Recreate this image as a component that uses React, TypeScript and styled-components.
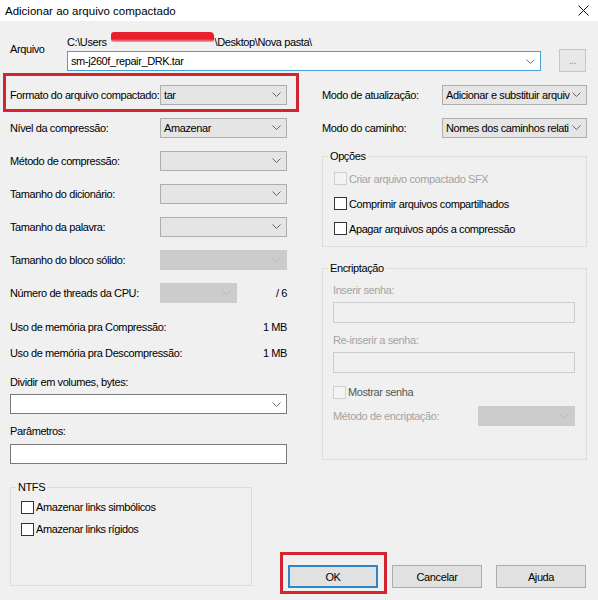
import styled, { createGlobalStyle, css } from 'styled-components'

const GlobalStyle = createGlobalStyle`
  html, body {
    margin: 0;
    padding: 0;
    background: #f0f0f0;
  }
  body {
    font-family: "Liberation Sans", Arial, sans-serif;
    font-size: 11px;
    letter-spacing: -0.4px;
    color: #000;
  }
`

type SelectVariant = 'normal' | 'disabled' | 'white' | 'focus'

const Chevron = () => (
  <ChevronSvg width="9" height="5" viewBox="0 0 9 5">
    <polyline points="0.5,0.5 4.5,4.5 8.5,0.5" fill="none" stroke="currentColor" strokeWidth="1" />
  </ChevronSvg>
)

const CloseIcon = () => (
  <svg width="11" height="11" viewBox="0 0 11 11">
    <path d="M0.5 0.5 L10.5 10.5 M10.5 0.5 L0.5 10.5" stroke="#111" strokeWidth="1" />
  </svg>
)

const Select = ({ variant = 'normal', width, children }: {
  variant?: SelectVariant
  width: string
  children?: React.ReactNode
}) => (
  <SelectBox $variant={variant} $width={width}>
    <SelectText>{children}</SelectText>
    <Chevron />
  </SelectBox>
)

const Check = ({ label, disabled, dim }: { label: string; disabled?: boolean; dim?: boolean }) => (
  <CheckRow $disabled={disabled} $dim={dim}>
    <CheckBox $disabled={disabled} />
    <span>{label}</span>
  </CheckRow>
)

export default function App() {
  return (
    <>
      <GlobalStyle />
      <Window>
        <TitleBar>
          <Title>Adicionar ao arquivo compactado</Title>
          <CloseIcon />
        </TitleBar>

        <Body>
          <ArchiveSection>
            <ArchiveLabel>Arquivo</ArchiveLabel>
            <div>
              <PathText>
                C:\Users<Redaction />\Desktop\Nova pasta\
              </PathText>
              <Select variant="focus" width="474px">sm-j260f_repair_DRK.tar</Select>
            </div>
            <BrowseButton>...</BrowseButton>
          </ArchiveSection>

          <Columns>
            <LeftColumn>
              <FormRow $columns="150px 127px">
                <span>Formato do arquivo compactado:</span>
                <Select width="127px">tar</Select>
                <Annotation $inset="-5px -12px -1px -7px" />
              </FormRow>
              <FormRow $columns="150px 127px">
                <span>Nível da compressão:</span>
                <Select width="127px">Amazenar</Select>
              </FormRow>
              <FormRow $columns="150px 127px">
                <span>Método de compressão:</span>
                <Select width="127px" />
              </FormRow>
              <FormRow $columns="150px 127px">
                <span>Tamanho do dicionário:</span>
                <Select width="127px" />
              </FormRow>
              <FormRow $columns="150px 127px">
                <span>Tamanho da palavra:</span>
                <Select width="127px" />
              </FormRow>
              <FormRow $columns="150px 127px">
                <span>Tamanho do bloco sólido:</span>
                <Select variant="disabled" width="127px" />
              </FormRow>
              <FormRow $columns="150px 77px 1fr">
                <span>Número de threads da CPU:</span>
                <Select variant="disabled" width="77px" />
                <ThreadCount>/ 6</ThreadCount>
              </FormRow>

              <InfoRow $first>
                <span>Uso de memória pra Compressão:</span>
                <span>1 MB</span>
              </InfoRow>
              <InfoRow>
                <span>Uso de memória pra Descompressão:</span>
                <span>1 MB</span>
              </InfoRow>

              <Caption $gap="9px">Dividir em volumes, bytes:</Caption>
              <FieldSpacer $gap="5px">
                <Select variant="white" width="277px" />
              </FieldSpacer>
              <Caption $gap="10px">Parâmetros:</Caption>
              <TextBox $gap="6px" />
            </LeftColumn>

            <RightColumn>
              <FormRow $columns="120px 145px">
                <span>Modo de atualização:</span>
                <Select width="145px">Adicionar e substituir arquiv</Select>
              </FormRow>
              <FormRow $columns="120px 145px">
                <span>Modo do caminho:</span>
                <Select width="145px">Nomes dos caminhos relati</Select>
              </FormRow>

              <Group $gap="5px">
                <Legend>Opções</Legend>
                <OptionsContent>
                  <Check label="Criar arquivo compactado SFX" disabled />
                  <Check label="Comprimir arquivos compartilhados" />
                  <Check label="Apagar arquivos após a compressão" />
                </OptionsContent>
              </Group>

              <Group $gap="14px">
                <Legend>Encriptação</Legend>
                <EncryptContent>
                  <Caption $gap="8px" $disabled>Inserir senha:</Caption>
                  <PasswordBox $gap="5px" />
                  <Caption $gap="10px" $disabled>Re-inserir a senha:</Caption>
                  <PasswordBox $gap="5px" />
                  <ShowPasswordRow>
                    <Check label="Mostrar senha" disabled dim />
                  </ShowPasswordRow>
                  <MethodRow>
                    <DisabledText>Método de encriptação:</DisabledText>
                    <Select variant="disabled" width="97px" />
                  </MethodRow>
                </EncryptContent>
              </Group>
            </RightColumn>
          </Columns>

          <Footer>
            <NtfsGroup>
              <Legend>NTFS</Legend>
              <NtfsContent>
                <Check label="Amazenar links simbólicos" />
                <Check label="Amazenar links rígidos" />
              </NtfsContent>
            </NtfsGroup>

            <ButtonBar>
              <DialogButton $default>
                OK
                <Annotation $inset="-15px -11px -8px -10px" />
              </DialogButton>
              <DialogButton>Cancelar</DialogButton>
              <DialogButton>Ajuda</DialogButton>
            </ButtonBar>
          </Footer>
        </Body>
      </Window>
    </>
  )
}

const Window = styled.div`
  width: 598px;
  height: 600px;
  background: #f0f0f0;
  display: flex;
  flex-direction: column;
  overflow: hidden;
`

const TitleBar = styled.div`
  height: 21px;
  background: #fff;
  display: flex;
  align-items: center;
  justify-content: space-between;
  padding: 0 9px 0 5px;
`

const Title = styled.span`
  font-size: 11.5px;
  letter-spacing: 0;
  color: #000;
`

const Body = styled.div`
  padding: 0 11px 0 10px;
  line-height: 14px;
`

const ArchiveSection = styled.div`
  display: grid;
  grid-template-columns: 57px 474px auto;
  padding-top: 14px;
`

const ArchiveLabel = styled.span`
  margin-top: 7px;
`

const PathText = styled.div`
  margin-bottom: 2px;
  white-space: nowrap;
`

const Redaction = styled.span`
  display: inline-block;
  width: 103px;
  height: 10px;
  margin: -3px 1px 0 4px;
  vertical-align: top;
  border-radius: 3px 4px 2px 3px;
  background: linear-gradient(#e8202c 0 70%, rgba(232, 32, 44, 0.35) 100%);
`

const BrowseButton = styled.div`
  margin: 14px 0 0 18px;
  width: 27px;
  height: 23px;
  box-sizing: border-box;
  border: 1px solid #c6c6c6;
  background: #e8e8e8;
  color: #8a8a8a;
  font-size: 10px;
  display: flex;
  align-items: center;
  justify-content: center;
`

const Columns = styled.div`
  display: flex;
  gap: 35px;
  margin-top: 6px;
`

const LeftColumn = styled.div`
  width: 277px;
  display: flex;
  flex-direction: column;
`

const RightColumn = styled.div`
  width: 265px;
  display: flex;
  flex-direction: column;
`

const FormRow = styled.div<{ $columns: string }>`
  position: relative;
  display: grid;
  grid-template-columns: ${({ $columns }) => $columns};
  align-items: center;
  height: 33px;
  white-space: nowrap;
`

const ThreadCount = styled.span`
  text-align: right;
`

const Annotation = styled.span<{ $inset: string }>`
  position: absolute;
  inset: ${({ $inset }) => $inset};
  border: 3px solid #d3242f;
  pointer-events: none;
`

const selectVariants = {
  normal: css`
    background: #e5e5e5;
    border-color: #adadad;
    color: #000;
  `,
  disabled: css`
    background: #cccccc;
    border-color: #cccccc;
    color: #a8a8a8;
  `,
  white: css`
    background: #fff;
    border-color: #7a7a7a;
    color: #000;
  `,
  focus: css`
    background: #fff;
    border-color: #4a9fd6;
    color: #000;
  `,
}

const SelectBox = styled.div<{ $variant: SelectVariant; $width: string }>`
  width: ${({ $width }) => $width};
  height: 20px;
  box-sizing: border-box;
  border: 1px solid;
  display: flex;
  align-items: center;
  padding: 0 5px 0 3px;
  ${({ $variant }) => selectVariants[$variant]}
`

const SelectText = styled.span`
  flex: 1;
  overflow: hidden;
  white-space: nowrap;
`

const ChevronSvg = styled.svg`
  flex: none;
  margin-left: 2px;
  color: currentColor;
  opacity: 0.55;
`

const InfoRow = styled.div<{ $first?: boolean }>`
  display: flex;
  justify-content: space-between;
  align-items: center;
  height: 26px;
  margin-top: ${({ $first }) => ($first ? '5px' : '0')};
`

const Caption = styled.div<{ $gap: string; $disabled?: boolean }>`
  margin-top: ${({ $gap }) => $gap};
  color: ${({ $disabled }) => ($disabled ? '#a3a3a3' : '#000')};
`

const FieldSpacer = styled.div<{ $gap: string }>`
  margin-top: ${({ $gap }) => $gap};
`

const TextBox = styled.div<{ $gap: string }>`
  margin-top: ${({ $gap }) => $gap};
  height: 20px;
  box-sizing: border-box;
  border: 1px solid #7a7a7a;
  background: #fff;
`

const PasswordBox = styled.div<{ $gap: string }>`
  margin-top: ${({ $gap }) => $gap};
  height: 21px;
  box-sizing: border-box;
  border: 1px solid #cccccc;
  background: #f0f0f0;
`

const Group = styled.fieldset<{ $gap?: string }>`
  margin: ${({ $gap }) => $gap ?? '0'} 0 0 0;
  padding: 0;
  min-width: 0;
  border: 1px solid #dcdcdc;
`

const Legend = styled.legend`
  margin-left: 5px;
  padding: 0 2px;
  line-height: 14px;
  color: #000;
`

const OptionsContent = styled.div`
  padding: 3px 11px 5px 11px;
  display: flex;
  flex-direction: column;
`

const EncryptContent = styled.div`
  padding: 0 11px 33px 10px;
  display: flex;
  flex-direction: column;
`

const ShowPasswordRow = styled.div`
  margin-top: 9px;
  height: 20px;
  display: flex;
  align-items: center;
`

const MethodRow = styled.div`
  margin-top: 4px;
  display: flex;
  align-items: center;
  justify-content: space-between;
`

const DisabledText = styled.span`
  color: #a3a3a3;
`

const CheckRow = styled.label<{ $disabled?: boolean; $dim?: boolean }>`
  display: flex;
  align-items: center;
  gap: 2px;
  height: 25px;
  white-space: nowrap;
  color: ${({ $disabled, $dim }) => ($dim ? '#555' : $disabled ? '#a3a3a3' : '#000')};
`

const CheckBox = styled.span<{ $disabled?: boolean }>`
  width: 13px;
  height: 13px;
  box-sizing: border-box;
  border: 1px solid ${({ $disabled }) => ($disabled ? '#cfcfcf' : '#333')};
  background: ${({ $disabled }) => ($disabled ? '#f4f4f4' : '#fff')};
`

const Footer = styled.div`
  display: flex;
  justify-content: space-between;
  align-items: flex-end;
  margin-top: 16px;
`

const NtfsGroup = styled(Group)`
  width: 242px;
  box-sizing: border-box;
  margin-bottom: 2px;
`

const NtfsContent = styled.div`
  padding: 2px 10px 45px 10px;
  display: flex;
  flex-direction: column;

  & > label {
    height: 22px;
  }
`

const ButtonBar = styled.div`
  display: flex;
  gap: 14px;
  margin-right: 1px;
`

const DialogButton = styled.div<{ $default?: boolean }>`
  position: relative;
  width: 90px;
  height: 23px;
  box-sizing: border-box;
  display: flex;
  align-items: center;
  justify-content: center;
  background: #e1e1e1;
  border: ${({ $default }) => ($default ? '2px solid #2f86c6' : '1px solid #adadad')};
`
